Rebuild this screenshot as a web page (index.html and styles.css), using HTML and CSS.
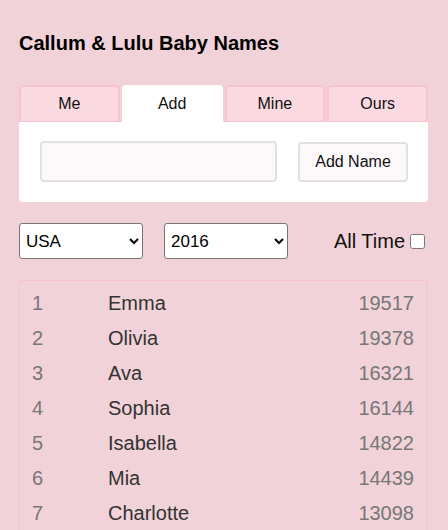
FILE: index.html
```html
<!DOCTYPE html>
<html>
<head>
<meta charset="utf-8">
<link rel="stylesheet" href="styles.css">
</head>
<body>
<div class="app">
  <h1 class="title">Callum &amp; Lulu Baby Names</h1>
  <div class="tabs">
    <div class="tab">Me</div>
    <div class="tab active">Add</div>
    <div class="tab">Mine</div>
    <div class="tab">Ours</div>
  </div>
  <div class="panel">
    <input class="name-input" type="text">
    <button class="add-btn">Add Name</button>
  </div>
  <div class="filters">
    <select class="sel"><option>USA</option></select>
    <select class="sel"><option>2016</option></select>
    <label class="alltime">All Time <input type="checkbox" class="chk"></label>
  </div>
  <div class="list">
    <div class="row"><span class="rank">1</span><span class="name">Emma</span><span class="count">19517</span></div>
    <div class="row"><span class="rank">2</span><span class="name">Olivia</span><span class="count">19378</span></div>
    <div class="row"><span class="rank">3</span><span class="name">Ava</span><span class="count">16321</span></div>
    <div class="row"><span class="rank">4</span><span class="name">Sophia</span><span class="count">16144</span></div>
    <div class="row"><span class="rank">5</span><span class="name">Isabella</span><span class="count">14822</span></div>
    <div class="row"><span class="rank">6</span><span class="name">Mia</span><span class="count">14439</span></div>
    <div class="row"><span class="rank">7</span><span class="name">Charlotte</span><span class="count">13098</span></div>
  </div>
</div>
</body>
</html>
```
FILE: styles.css
```css
html, body {
  margin: 0;
  padding: 0;
  background: #f1d2d8;
  font-family: "Liberation Sans", Arial, sans-serif;
  overflow: hidden;
}
.app {
  width: 409px;
  padding: 0 20px 0 19px;
}
.title {
  margin: 0;
  padding-top: 31px;
  font-size: 20px;
  line-height: 24px;
  font-weight: bold;
  color: #000;
  height: 53px;
  box-sizing: border-box;
  padding-left: 0;
}
.tabs {
  margin-top: 32px;
  display: grid;
  grid-template-columns: repeat(4, 1fr);
  gap: 2px;
}
.tab {
  height: 37px;
  box-sizing: border-box;
  background: #fbd9e0;
  border: 2px solid #f8c3ce;
  border-bottom-width: 1px;
  border-radius: 4px 4px 0 0;
  text-align: center;
  font-size: 16px;
  line-height: 34px;
  color: #111;
}
.tab.active {
  background: #fff;
  border-color: #fff;
}
.panel {
  background: #fff;
  border-radius: 0 0 4px 4px;
  height: 80px;
  box-sizing: border-box;
  padding: 19px 20px 0 21px;
  display: flex;
  align-items: flex-start;
  justify-content: space-between;
}
.name-input {
  width: 237px;
  height: 41px;
  box-sizing: border-box;
  border: 2px solid #e2e0e1;
  border-radius: 4px;
  background: #fdf8f9;
  margin: 0;
}
.add-btn {
  width: 110px;
  height: 40px;
  margin-top: 1px;
  box-sizing: border-box;
  border: 2px solid #e2e0e1;
  border-radius: 4px;
  background: #fdf8f9;
  font-family: "Liberation Sans", Arial, sans-serif;
  font-size: 16px;
  color: #111;
  padding: 0;
}
.filters {
  margin-top: 21px;
  display: flex;
  align-items: center;
  gap: 21px;
  height: 36px;
}
.sel {
  width: 124px;
  height: 36px;
  box-sizing: border-box;
  border: 1px solid #767676;
  border-radius: 3px;
  background: #fff;
  font-family: "Liberation Sans", Arial, sans-serif;
  font-size: 17px;
  color: #000;
  padding: 0 2px;
  margin: 0;
}
.alltime {
  margin-left: auto;
  font-size: 20px;
  color: #111;
  display: flex;
  align-items: center;
  gap: 1px;
}
.chk {
  width: 15px;
  height: 15px;
  margin: 0 3px 0 4px;
}
.list {
  margin-top: 21px;
  border: 1px solid #f6c2cc;
  padding: 5px 13px 0 12px;
  height: 260px;
}
.row {
  display: flex;
  height: 35px;
  align-items: center;
  font-size: 20px;
}
.rank {
  width: 76px;
  color: #777;
}
.name {
  flex: 1;
  color: #333;
}
.count {
  color: #777;
}
```
